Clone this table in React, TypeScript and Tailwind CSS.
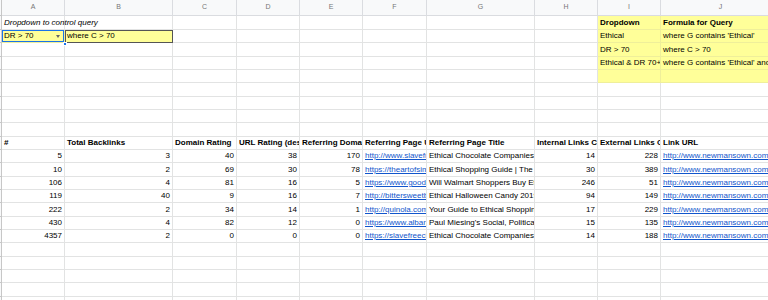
type Cell = {
  t: string;
  b?: boolean;
  i?: boolean;
  r?: boolean;
  link?: boolean;
  y?: boolean;
};

const COLS = ["A", "B", "C", "D", "E", "F", "G", "H", "I", "J"];

const txt = (t: string, extra: Partial<Cell> = {}): Cell => ({ t, ...extra });
const num = (n: number): Cell => ({ t: String(n), r: true });
const link = (t: string): Cell => ({ t, link: true });
const empty: Cell = { t: "" };
const yel: Cell = { t: "", y: true };

const dataRows: (string | number)[][] = [
  [5, 3, 40, 38, 170, "http://www.slavefreechocolate.org", "Ethical Chocolate Companies | Slave Free", 14, 228],
  [10, 2, 69, 30, 78, "https://theartofsimple.net", "Ethical Shopping Guide | The Art of Simple", 30, 389],
  [106, 4, 81, 16, 5, "https://www.goodhousekeeping.com", "Will Walmart Shoppers Buy Ethical?", 246, 51],
  [119, 40, 9, 16, 7, "http://bittersweetblog.com", "Ethical Halloween Candy 2019", 94, 149],
  [222, 2, 34, 14, 1, "http://quinola.com", "Your Guide to Ethical Shopping", 17, 229],
  [430, 4, 82, 12, 0, "https://www.albany.edu", "Paul Miesing's Social, Political and Ethical", 15, 135],
  [4357, 2, 0, 0, 0, "https://slavefreechocolate.org", "Ethical Chocolate Companies | Slave Free", 14, 188],
];

const blank = (): Cell[] => COLS.map(() => empty);

const buildRows = (): Cell[][] => {
  const rows: Cell[][] = [];
  // row 1
  rows.push([
    txt("Dropdown to control query", { i: true }),
    empty, empty, empty, empty, empty, empty, empty,
    txt("Dropdown", { b: true, y: true }),
    txt("Formula for Query", { b: true, y: true }),
  ]);
  // row 2
  rows.push([
    txt("DR > 70", { y: true }),
    txt("where C > 70", { y: true }),
    empty, empty, empty, empty, empty, empty,
    txt("Ethical", { y: true }),
    txt("where G contains 'Ethical'", { y: true }),
  ]);
  rows.push([...blank().slice(0, 8), txt("DR > 70", { y: true }), txt("where C > 70", { y: true })]);
  rows.push([
    ...blank().slice(0, 8),
    txt("Ethical & DR 70+", { y: true }),
    txt("where G contains 'Ethical' and C > 70", { y: true }),
  ]);
  rows.push([...blank().slice(0, 8), yel, yel]);
  for (let k = 0; k < 4; k++) rows.push(blank());
  rows.push(
    [
      "#",
      "Total Backlinks",
      "Domain Rating",
      "URL Rating (desc)",
      "Referring Domains",
      "Referring Page URL",
      "Referring Page Title",
      "Internal Links Count",
      "External Links Count",
      "Link URL",
    ].map((h) => txt(h, { b: true })),
  );
  dataRows.forEach((d) => {
    rows.push([
      num(d[0] as number),
      num(d[1] as number),
      num(d[2] as number),
      num(d[3] as number),
      num(d[4] as number),
      link(d[5] as string),
      txt(d[6] as string),
      num(d[7] as number),
      num(d[8] as number),
      link("http://www.newmansown.com/"),
    ]);
  });
  for (let k = 0; k < 5; k++) rows.push(blank());
  return rows;
};

const App = () => {
  const rows = buildRows();

  return (
    <div
      className="w-[768px] h-[300px] overflow-hidden bg-white text-[#000] relative"
      style={{ fontFamily: '"Liberation Sans", Arial, sans-serif' }}
    >
      <div className="grid grid-cols-[2px_63px_108px_64px_63px_63px_64px_108px_63px_63px_120px] grid-rows-[16px_14px_13px_14px_13px_13px_14px_13px_13px_14px_13px_13px_14px_13px_13px_14px_13px_13px_14px_13px_13px_14px_13px]">
        {/* HEADER ROW */}
        <div className="bg-[#f8f9fa] border-r border-b border-[#c7c7c7]" />
        {COLS.map((c) => (
          <div
            key={c}
            className="bg-[#f8f9fa] border-r border-b border-[#dadce0] flex items-center justify-center text-[7px] text-[#777]"
          >
            {c}
          </div>
        ))}

        {rows.map((row, ri) => (
          <>
            <div
              key={`rh-${ri}`}
              className="bg-[#f8f9fa] border-r border-b border-[#c7c7c7]"
            />
            {row.map((cell, ci) => {
              const isA1 = ri === 0 && ci === 0;
              const isA2 = ri === 1 && ci === 0;
              const isB2 = ri === 1 && ci === 1;
              return (
                <div
                  key={`${ri}-${ci}`}
                  className={[
                    "relative flex items-center whitespace-nowrap text-[8px] leading-none border-r border-b px-[2px]",
                    isA1 ? "overflow-visible z-10" : "overflow-hidden",
                    cell.y ? "bg-[#ffff99] border-[#efef9a]" : "border-[#e2e3e3]",
                    cell.r ? "justify-end" : "justify-start",
                    cell.b ? "font-bold" : "",
                    cell.i ? "italic" : "",
                    cell.link ? "text-[#1155cc] underline" : "",
                    isB2 ? "outline outline-1 outline-[#555] -outline-offset-1" : "",
                  ].join(" ")}
                >
                  {cell.t}
                  {isA2 && (
                    <>
                      <span className="absolute right-[4px] top-[5px] w-0 h-0 border-l-[2.5px] border-r-[2.5px] border-t-[3px] border-l-transparent border-r-transparent border-t-[#666]" />
                      <span className="absolute inset-0 border-[1.5px] border-[#1a73e8]" />
                    </>
                  )}
                </div>
              );
            })}
          </>
        ))}
      </div>
      {/* fill handle of selected cell */}
      <span className="absolute left-[63px] top-[42px] w-[4px] h-[4px] bg-[#1a73e8] border border-white z-20" />
    </div>
  );
};

export default App;
